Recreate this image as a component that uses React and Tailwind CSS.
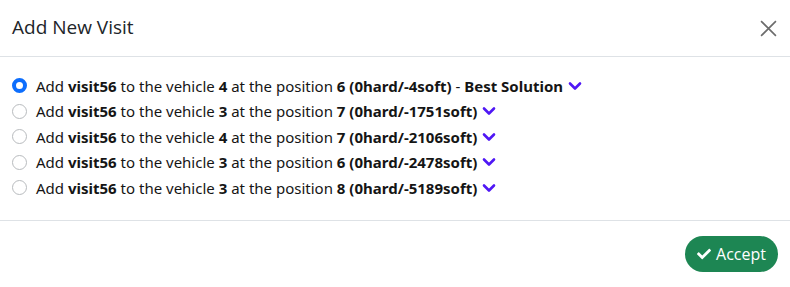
import React, { useState } from "react";
import { FaCheck } from "react-icons/fa";

const options = [
  { vehicle: 4, position: 6, score: "0hard/-4soft", best: true },
  { vehicle: 3, position: 7, score: "0hard/-1751soft" },
  { vehicle: 4, position: 7, score: "0hard/-2106soft" },
  { vehicle: 3, position: 6, score: "0hard/-2478soft" },
  { vehicle: 3, position: 8, score: "0hard/-5189soft" },
];

const Chevron = () => (
  <svg width="14" height="10" viewBox="0 0 14 10" className="ml-[5px] text-[#4f17f5] shrink-0">
    <path d="M2 2.5 L7 7.5 L12 2.5" fill="none" stroke="currentColor" strokeWidth="2.6" strokeLinecap="round" strokeLinejoin="round" />
  </svg>
);

const App = () => {
  const [selected, setSelected] = useState(0);

  return (
    <div className="w-[790px] h-[287px] bg-white flex flex-col font-['Noto_Sans',sans-serif] text-[#151515]">
      <div className="h-[57px] flex items-center justify-between pl-3 pr-3 border-b border-[#dee2e6]">
        <h1 className="text-[19px] text-[#212529] font-['Open_Sans',sans-serif] -mt-[2px]">Add New Visit</h1>
        <button className="w-5 h-5 flex items-center justify-center text-[#6c6c6c]">
          <svg width="17" height="17" viewBox="0 0 16 16">
            <path d="M1 1 L15 15 M15 1 L1 15" stroke="currentColor" strokeWidth="1.5" />
          </svg>
        </button>
      </div>

      <div className="flex-1 flex flex-col pt-[16px] pl-3 border-b border-[#dee2e6]">
        {options.map((o, i) => (
          <label key={i} className="h-[25.5px] flex items-center text-[15px] cursor-pointer">
            <input
              type="radio"
              name="visit"
              checked={selected === i}
              onChange={() => setSelected(i)}
              className="appearance-none w-[15px] h-[15px] mr-[9px] rounded-full border border-[#b8bbbe] bg-white checked:border-[4.5px] checked:border-[#0d6efd] shrink-0"
            />
            <span>
              Add <b>visit56</b> to the vehicle <b>{o.vehicle}</b> at the position{" "}
              <b>
                {o.position} ({o.score})
              </b>
              {o.best && (
                <>
                  {" "}- <b>Best Solution</b>
                </>
              )}
            </span>
            <Chevron />
          </label>
        ))}
      </div>

      <div className="h-[66px] flex items-center justify-end pr-3">
        <button className="h-9 px-[12px] rounded-full bg-[#1d8653] text-white flex items-center gap-[5px] text-[16px] font-['Open_Sans',sans-serif]">
          <FaCheck className="w-[14px] h-[14px]" />
          Accept
        </button>
      </div>
    </div>
  );
};

export default App;
